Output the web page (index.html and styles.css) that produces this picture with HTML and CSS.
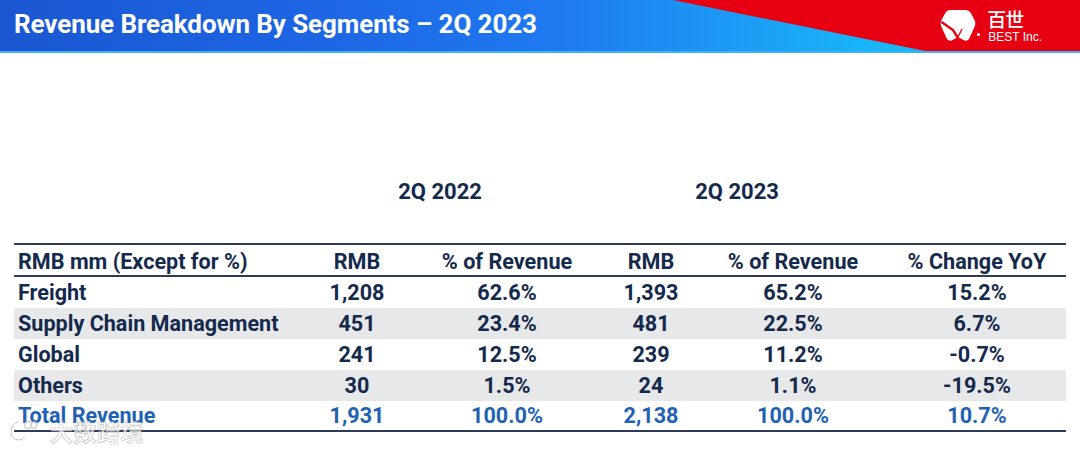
FILE: index.html
```html
<!DOCTYPE html>
<html>
<head>
<meta charset="utf-8">
<link rel="stylesheet" href="styles.css">
</head>
<body>
<header class="banner">
  <h1 class="title">Revenue Breakdown By Segments – 2Q 2023</h1>
  <div class="logo">
    <svg class="logo-mark" width="36" height="34" viewBox="0 0 36 34">
      <path d="M10 1 H26 Q29 1 30.5 3.5 L35 12 Q36 15 34.5 18 L29.5 29 Q28 32.5 24.5 31.5 L18 28 L11.5 31.5 Q8 32.5 6.5 29 L1.5 18 Q0 15 1 12 L5.5 3.5 Q7 1 10 1 Z" fill="#fff"/>
      <path d="M1.5 13 L13 21 L18 29" stroke="#e60012" stroke-width="2.4" fill="none"/>
      <path d="M18 28 L22 20" stroke="#e60012" stroke-width="1.4" fill="none"/>
    </svg>
    <span class="logo-dot"></span>
    <div class="logo-text">
      <span class="logo-cn">百世</span>
      <span class="logo-en">BEST Inc.</span>
    </div>
  </div>
</header>

<main class="content">
  <div class="years">
    <div class="year year-a">2Q 2022</div>
    <div class="year year-b">2Q 2023</div>
  </div>

  <div class="table">
    <div class="row head">
      <div class="c lbl">RMB mm (Except for %)</div>
      <div class="c">RMB</div>
      <div class="c">% of Revenue</div>
      <div class="c">RMB</div>
      <div class="c">% of Revenue</div>
      <div class="c last">% Change YoY</div>
    </div>
    <div class="row">
      <div class="c lbl">Freight</div>
      <div class="c">1,208</div>
      <div class="c">62.6%</div>
      <div class="c">1,393</div>
      <div class="c">65.2%</div>
      <div class="c last">15.2%</div>
    </div>
    <div class="row shade">
      <div class="c lbl">Supply Chain Management</div>
      <div class="c">451</div>
      <div class="c">23.4%</div>
      <div class="c">481</div>
      <div class="c">22.5%</div>
      <div class="c last">6.7%</div>
    </div>
    <div class="row">
      <div class="c lbl">Global</div>
      <div class="c">241</div>
      <div class="c">12.5%</div>
      <div class="c">239</div>
      <div class="c">11.2%</div>
      <div class="c last">-0.7%</div>
    </div>
    <div class="row shade">
      <div class="c lbl">Others</div>
      <div class="c">30</div>
      <div class="c">1.5%</div>
      <div class="c">24</div>
      <div class="c">1.1%</div>
      <div class="c last">-19.5%</div>
    </div>
    <div class="row total">
      <div class="c lbl">Total Revenue</div>
      <div class="c">1,931</div>
      <div class="c">100.0%</div>
      <div class="c">2,138</div>
      <div class="c">100.0%</div>
      <div class="c last">10.7%</div>
    </div>
  </div>
</main>

<div class="watermark">
  <svg class="wm-icon" width="30" height="26" viewBox="0 0 30 26">
    <path d="M10 4 Q3 6 3 14 Q3 22 11 22 Q15 22 17 19" stroke="#fff" stroke-width="3" fill="none"/>
    <path d="M10 4 Q3 6 3 14 Q3 22 11 22 Q15 22 17 19" stroke="#bbb" stroke-width="1" fill="none"/>
    <circle cx="20" cy="7" r="3.5" stroke="#ccc" stroke-width="1.5" fill="none"/>
    <circle cx="26" cy="7" r="3" stroke="#ccc" stroke-width="1.5" fill="none"/>
  </svg>
  <span class="wm-text">大数跨境</span>
</div>
</body>
</html>
```

FILE: styles.css
```css
* { box-sizing: border-box; }

html, body {
  margin: 0;
  padding: 0;
  background: #fff;
  width: 1080px;
  height: 453px;
  overflow: hidden;
  font-family: Roboto, "Liberation Sans", "Noto Sans CJK SC", sans-serif;
}

.banner {
  position: relative;
  height: 53px;
  display: flex;
  align-items: center;
  justify-content: space-between;
  padding: 0 0 0 14px;
  background: linear-gradient(90deg, #1b56d2 0%, #1d66e4 30%, #1f7af0 52%, #1c9af4 68%, #17b8f8 82%, #17b8f8 100%);
  border-bottom: 2px solid #3fb0f2;
  overflow: hidden;
}

.banner::before {
  content: "";
  position: absolute;
  top: 0;
  right: 0;
  width: 407px;
  height: 51px;
  background: #e60012;
  clip-path: polygon(0 0, 100% 0, 100% 100%, 62% 100%);
}

.title {
  position: relative;
  margin: 0;
  padding-bottom: 4px;
  color: #fff;
  font-family: Roboto, "Liberation Sans", sans-serif;
  font-weight: 700;
  font-size: 26px;
  letter-spacing: -0.1px;
}

.logo {
  position: relative;
  display: flex;
  align-items: center;
  margin-right: 38px;
}

.logo-mark { display: block; }

.logo-dot {
  width: 3px;
  height: 3px;
  border-radius: 50%;
  background: #fff;
  align-self: flex-end;
  margin: 0 8px 7px 1px;
}

.logo-text {
  display: flex;
  flex-direction: column;
  color: #fff;
}

.logo-cn {
  display: block;
  height: 21px;
  line-height: 21px;
  font-family: "Noto Sans CJK SC", sans-serif;
  font-size: 19px;
  font-weight: 500;
  letter-spacing: -1px;
  margin-left: -1px;
}

.logo-en {
  display: block;
  height: 12px;
  line-height: 12px;
  font-family: "Liberation Sans", Arial, sans-serif;
  font-size: 12px;
  margin-top: 2px;
}

.content {
  padding: 123px 14px 0 14px;
  color: #142a4c;
}

.years {
  display: grid;
  grid-template-columns: 276px 300px 284px;
  height: 30px;
  align-items: center;
  font-size: 22px;
  font-weight: 700;
  color: #142a4c;
}

.year-a { grid-column: 2; text-align: center; }
.year-b { grid-column: 3; text-align: center; padding-left: 10px; }

.table {
  margin-top: 37px;
  width: 1052px;
  border-top: 2px solid #2c3b57;
  border-bottom: 2px solid #2c3b57;
}

.row {
  display: grid;
  grid-template-columns: 276px 134px 166px 122px 162px 192px;
  height: 31px;
  align-items: center;
  font-size: 21.6px;
  font-weight: 700;
  color: #142a4c;
}

.row.head {
  height: 32px;
  border-bottom: 2px solid #2c3b57;
}

.row.head .c { padding-top: 3px; }

.row.shade { background: #e7e8ea; }

.row.total {
  height: 29px;
  color: #1f62b4;
}

.c {
  text-align: center;
  white-space: nowrap;
}

.c.lbl {
  text-align: left;
  padding-left: 4px;
}

.c.last { padding-left: 14px; }

.watermark {
  position: absolute;
  left: 8px;
  top: 414px;
  display: flex;
  align-items: center;
  gap: 12px;
  opacity: 0.85;
}

.wm-text {
  font-family: "Noto Sans CJK SC", sans-serif;
  font-size: 23px;
  font-weight: 700;
  color: rgba(255, 255, 255, 0.85);
  -webkit-text-stroke: 0.6px #b8b8b8;
  letter-spacing: 0.5px;
}
```
